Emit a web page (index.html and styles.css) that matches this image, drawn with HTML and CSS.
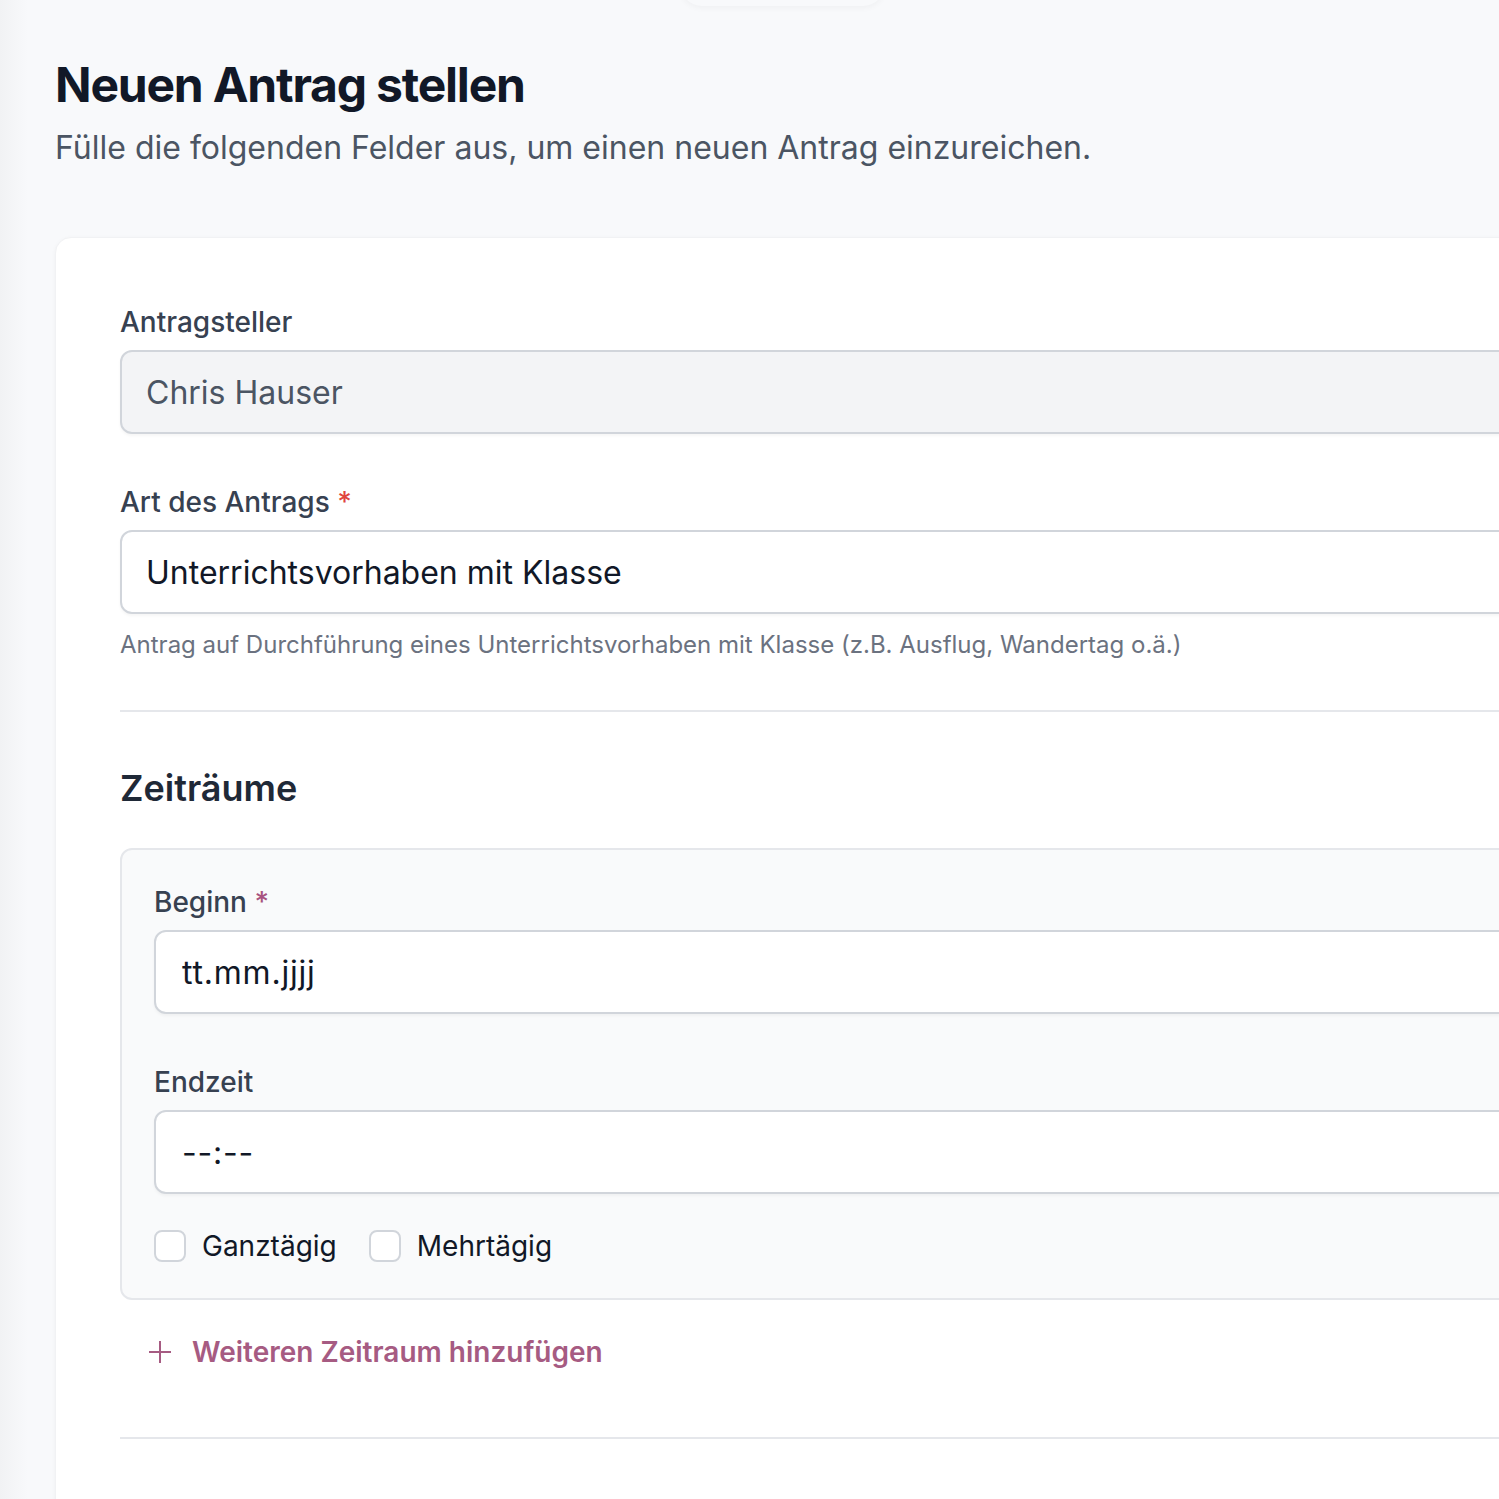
FILE: index.html
```html
<!DOCTYPE html>
<html lang="de">
<head>
<meta charset="utf-8">
<title>Neuen Antrag stellen</title>
<link rel="stylesheet" href="styles.css">
</head>
<body>
<div class="top-float"></div>
<main class="page">
  <header class="page-head">
    <h1 class="page-title">Neuen Antrag stellen</h1>
    <p class="page-sub">Fülle die folgenden Felder aus, um einen neuen Antrag einzureichen.</p>
  </header>

  <section class="card">
    <div class="group">
      <label class="label">Antragsteller</label>
      <div class="field field-disabled">Chris Hauser</div>
    </div>

    <div class="group">
      <label class="label">Art des Antrags <span class="req req-red">*</span></label>
      <div class="field">Unterrichtsvorhaben mit Klasse</div>
      <p class="help">Antrag auf Durchführung eines Unterrichtsvorhaben mit Klasse (z.B. Ausflug, Wandertag o.ä.)</p>
    </div>

    <div class="section">
      <h2 class="section-title">Zeiträume</h2>
      <div class="period">
        <div class="group-inner">
          <label class="label">Beginn <span class="req req-pink">*</span></label>
          <div class="field field-mono">tt.mm.jjjj</div>
        </div>
        <div class="group-inner">
          <label class="label">Endzeit</label>
          <div class="field field-mono">--:--</div>
        </div>
        <div class="checks">
          <label class="check"><span class="box"></span>Ganztägig</label>
          <label class="check"><span class="box"></span>Mehrtägig</label>
        </div>
      </div>
      <button class="add-btn" type="button">
        <svg class="plus" viewBox="0 0 24 24" width="24" height="24" aria-hidden="true">
          <path d="M12 1v22M1 12h22" stroke="currentColor" stroke-width="2" fill="none"/>
        </svg>
        Weiteren Zeitraum hinzufügen
      </button>
    </div>

    <div class="section section-next"></div>
  </section>
</main>
</body>
</html>
```

FILE: styles.css
```css
html, body {
  margin: 0;
  padding: 0;
  overflow: hidden;
}

body {
  font-family: Inter, "Noto Sans", sans-serif;
  background: linear-gradient(90deg, #f1f2f4 0px, #f8f9fb 28px, #f8f9fb 100%);
  color: #111827;
  position: relative;
  min-height: 1499px;
}

.top-float {
  position: absolute;
  top: -40px;
  left: 680px;
  width: 205px;
  height: 46px;
  border-radius: 22px;
  background: #f8f9fb;
  box-shadow: 0 2px 6px rgba(0, 0, 0, 0.04);
}

.page {
  width: 1800px;
  padding: 57px 0 0 55px;
  box-sizing: border-box;
}

.page-title {
  margin: 0;
  font-size: 48px;
  line-height: 56px;
  font-weight: 700;
  letter-spacing: -0.025em;
  color: #111827;
}

.page-sub {
  margin: 11px 0 0;
  font-size: 32px;
  line-height: 48px;
  color: #4b5563;
}

.card {
  margin-top: 65px;
  background: #ffffff;
  border: 1px solid #f1f2f4;
  border-radius: 16px;
  box-shadow: 0 1px 4px rgba(0, 0, 0, 0.04);
  padding: 64px;
  min-height: 1400px;
}

.group + .group {
  margin-top: 48px;
}

.label {
  display: block;
  font-size: 28px;
  line-height: 40px;
  font-weight: 500;
  color: #374151;
  margin-bottom: 8px;
}

.req-red {
  color: #e0453f;
}

.req-pink {
  color: #a8537f;
}

.field {
  box-sizing: border-box;
  height: 84px;
  border: 2px solid #d1d5db;
  border-radius: 12px;
  background: #ffffff;
  padding: 0 24px;
  display: flex;
  align-items: center;
  font-size: 32px;
  color: #111827;
  box-shadow: 0 2px 3px rgba(0, 0, 0, 0.04);
}

.field-disabled {
  background: #f3f4f6;
  color: #4b5563;
}

.field-mono {
  letter-spacing: 0.025em;
  padding-left: 26px;
}

.help {
  margin: 15px 0 0;
  font-size: 24px;
  line-height: 32px;
  color: #6b7280;
}

.section {
  margin-top: 49px;
  border-top: 2px solid #e5e7eb;
  padding-top: 48px;
}

.section-title {
  margin: 0;
  font-size: 36px;
  line-height: 56px;
  font-weight: 600;
  color: #1f2937;
}

.period {
  margin-top: 32px;
  background: #f9fafb;
  border: 2px solid #e5e7eb;
  border-radius: 12px;
  padding: 32px;
}

.group-inner + .group-inner {
  margin-top: 48px;
}

.checks {
  margin-top: 32px;
  display: flex;
  gap: 32px;
}

.check {
  display: flex;
  align-items: center;
  gap: 16px;
  font-size: 28px;
  line-height: 40px;
  color: #111827;
}

.box {
  box-sizing: border-box;
  width: 32px;
  height: 32px;
  border: 2px solid #d1d5db;
  border-radius: 8px;
  background: #ffffff;
}

.add-btn {
  margin-top: 16px;
  display: flex;
  align-items: center;
  gap: 20px;
  padding: 16px 0 16px 28px;
  border: 0;
  background: transparent;
  font-family: Inter, "Noto Sans", sans-serif;
  font-size: 28px;
  line-height: 40px;
  font-weight: 600;
  color: #a65b82;
  cursor: pointer;
}

.plus {
  display: block;
}
```
